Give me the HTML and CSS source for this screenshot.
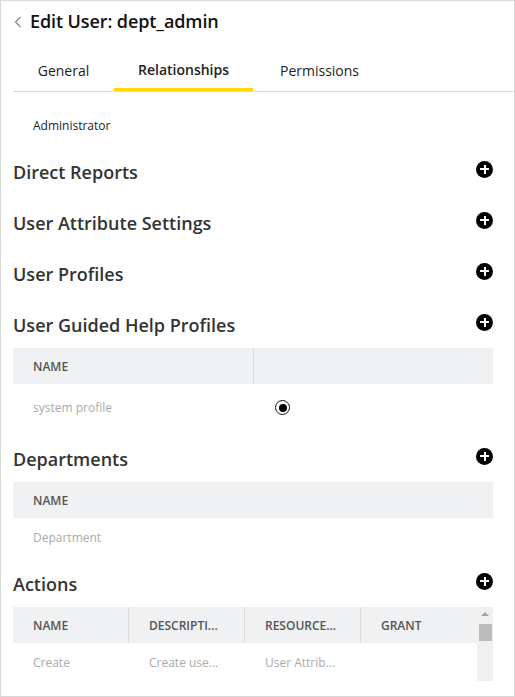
FILE: index.html
```html
<!DOCTYPE html>
<html>
<head>
<meta charset="utf-8">
<link rel="stylesheet" href="styles.css">
</head>
<body>
<div class="frame">
  <div class="header">
    <svg class="back" width="8" height="12" viewBox="0 0 8 12"><path d="M6.5 1 L1.5 6 L6.5 11" fill="none" stroke="#8a8a8a" stroke-width="1.3"/></svg>
    <h1 class="title">Edit User: dept_admin</h1>
  </div>
  <div class="tabs">
    <div class="tab tab-general">General</div>
    <div class="tab tab-active">Relationships</div>
    <div class="tab tab-perm">Permissions</div>
  </div>
  <div class="content">
    <div class="role">Administrator</div>

    <div class="section"><h2>Direct Reports</h2><span class="plus"></span></div>
    <div class="section"><h2>User Attribute Settings</h2><span class="plus"></span></div>
    <div class="section"><h2>User Profiles</h2><span class="plus"></span></div>
    <div class="section"><h2>User Guided Help Profiles</h2><span class="plus"></span></div>
    <div class="table t2">
      <div class="thead">
        <div class="th">NAME</div>
        <div class="th"></div>
      </div>
      <div class="trow">
        <div class="td">system profile</div>
        <div class="td"><span class="radio"></span></div>
      </div>
    </div>

    <div class="section"><h2>Departments</h2><span class="plus"></span></div>
    <div class="table t1">
      <div class="thead">
        <div class="th">NAME</div>
      </div>
      <div class="trow">
        <div class="td">Department</div>
      </div>
    </div>

    <div class="section"><h2>Actions</h2><span class="plus"></span></div>
    <div class="table-wrap">
      <div class="table t4">
        <div class="thead">
          <div class="th">NAME</div>
          <div class="th">DESCRIPTI...</div>
          <div class="th">RESOURCE...</div>
          <div class="th">GRANT</div>
        </div>
        <div class="trow">
          <div class="td">Create</div>
          <div class="td">Create use...</div>
          <div class="td">User Attrib...</div>
          <div class="td"></div>
        </div>
      </div>
      <div class="scrollbar">
        <div class="sb-arrow"></div>
        <div class="sb-thumb"></div>
      </div>
    </div>
  </div>
</div>
</body>
</html>
```

FILE: styles.css
```css
html, body {
  margin: 0;
  padding: 0;
  background: #fff;
}
.frame {
  width: 515px;
  height: 697px;
  box-sizing: border-box;
  border: 1px solid #d9d9d9;
  font-family: "Open Sans", "Noto Sans", sans-serif;
  color: #222;
  overflow: hidden;
}
.header {
  display: flex;
  align-items: center;
  height: 40px;
  padding-left: 13px;
}
.back {
  margin-right: 8px;
  margin-top: 1px;
}
.title {
  margin: 0;
  font-size: 18px;
  font-weight: 600;
  color: #111;
  letter-spacing: -0.1px;
}
.tabs {
  display: flex;
  margin-left: 12px;
  height: 50px;
  border-bottom: 1px solid #d9d9d9;
}
.tab {
  font-size: 14px;
  color: #222;
  display: flex;
  align-items: center;
  justify-content: center;
  box-sizing: border-box;
  height: 50px;
  padding-top: 8px;
}
.tab-general {
  width: 101px;
}
.tab-active {
  width: 139px;
  font-weight: 600;
  border-bottom: 3px solid #ffd900;
  padding-top: 9px;
}
.tab-perm {
  width: 133px;
}
.content {
  padding: 0 21px 0 12px;
}
.role {
  font-size: 12px;
  padding-left: 20px;
  height: 20px;
  line-height: 20px;
  margin-top: 24px;
  margin-bottom: 8px;
  color: #222;
}
.section {
  display: flex;
  justify-content: space-between;
  align-items: center;
  height: 51px;
}
.section h2 {
  margin: 0;
  font-size: 18px;
  font-weight: 600;
  color: #333;
  padding-top: 5px;
}
.plus {
  width: 17px;
  height: 17px;
  border-radius: 50%;
  background: #000;
  position: relative;
  margin-top: -1px;
}
.plus::before, .plus::after {
  content: "";
  position: absolute;
  background: #fff;
}
.plus::before {
  width: 9px;
  height: 2px;
  left: 4px;
  top: 7.5px;
}
.plus::after {
  width: 2px;
  height: 9px;
  left: 7.5px;
  top: 4px;
}
.table {
  width: 100%;
}
.thead {
  display: flex;
  background: #f0f1f2;
  height: 36px;
}
.th {
  font-size: 12px;
  font-weight: 600;
  color: #555;
  padding-left: 20px;
  display: flex;
  align-items: center;
  box-sizing: border-box;
}
.trow {
  display: flex;
  height: 47px;
}
.td {
  font-size: 12px;
  color: #aaa;
  padding-left: 20px;
  display: flex;
  align-items: center;
  box-sizing: border-box;
}
.t2 .th:first-child {
  width: 241px;
  border-right: 1px solid #dcdcdc;
}
.t2 .td:first-child {
  width: 241px;
}
.t2 .th:last-child, .t2 .td:last-child {
  flex: 1;
}
.t2 .td:last-child {
  padding-left: 21px;
}
.t1 .th, .t1 .td {
  flex: 1;
}
.t1 .trow {
  height: 38px;
}
.radio {
  width: 15px;
  height: 15px;
  box-sizing: border-box;
  border: 1.5px solid #111;
  border-radius: 50%;
  position: relative;
}
.radio::after {
  content: "";
  position: absolute;
  width: 8px;
  height: 8px;
  border-radius: 50%;
  background: #000;
  left: 50%;
  top: 50%;
  transform: translate(-50%, -50%);
}
.table-wrap {
  display: flex;
  height: 74px;
}
.t4 {
  flex: 1;
}
.t4 .th, .t4 .td {
  width: 116px;
}
.t4 .th:not(:last-child) {
  border-right: 1px solid #dcdcdc;
}
.t4 .th:last-child, .t4 .td:last-child {
  flex: 1;
}
.t4 .trow {
  height: 38px;
}
.scrollbar {
  width: 17px;
  background: #f0f0f0;
  position: relative;
}
.sb-arrow {
  position: absolute;
  left: 4px;
  top: 5px;
  width: 0;
  height: 0;
  border-left: 4px solid transparent;
  border-right: 4px solid transparent;
  border-bottom: 4px solid #a3a3a3;
}
.sb-thumb {
  position: absolute;
  left: 2px;
  top: 17px;
  width: 13px;
  height: 17px;
  background: #bcbcbc;
}
```
